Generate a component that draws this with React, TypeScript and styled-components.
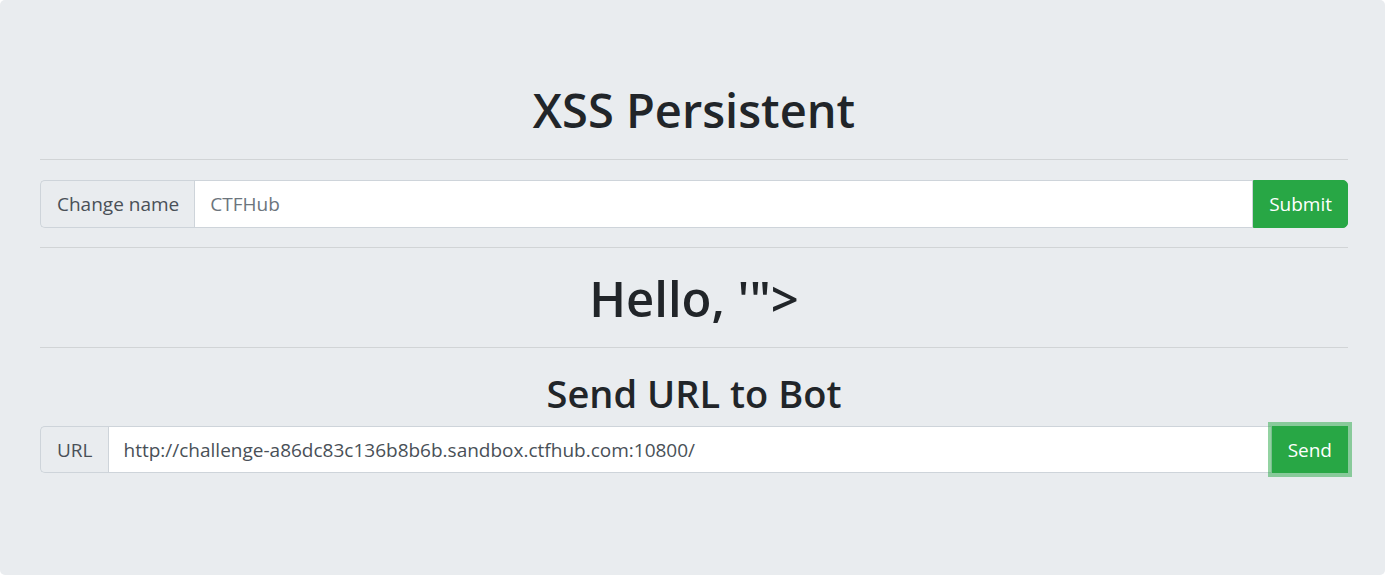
import React from "react";
import styled, {createGlobalStyle} from "styled-components";

const GlobalStyle = createGlobalStyle`
    html, body {
        margin: 0;
        padding: 0;
        background: #ffffff;
    }
    body {
        font-family: "Open Sans", "Noto Sans", "Liberation Sans", sans-serif;
        color: #212529;
    }
    * {
        box-sizing: border-box;
    }
`;

const Jumbotron = styled.main`
    min-height: 575px;
    background: #e9ecef;
    border-radius: 5px;
    padding: 80px 37px 40px 40px;
`;

const Title = styled.h1<{ $size: number; $lh: number }>`
    margin: 0;
    text-align: center;
    font-weight: 600;
    font-size: ${({$size}) => $size}px;
    line-height: ${({$lh}) => $lh}px;
    color: #212529;
`;

const Rule = styled.hr`
    margin: 19px 0 20px;
    border: 0;
    border-top: 1px solid rgba(0, 0, 0, 0.1);
`;

const InputGroup = styled.form<{ $height: number }>`
    display: flex;
    align-items: stretch;
    width: 100%;
    height: ${({$height}) => $height}px;
    margin: 0;
`;

const Addon = styled.span`
    display: flex;
    align-items: center;
    padding: 0 15px 0 16px;
    font-size: 19px;
    color: #495057;
    background: #e9ecef;
    border: 1px solid #ced4da;
    border-right: 0;
    border-radius: 5px 0 0 5px;
    white-space: nowrap;
`;

const Field = styled.input`
    flex: 1;
    min-width: 0;
    height: 100%;
    padding: 0 15px;
    font-family: inherit;
    font-size: 19px;
    color: #495057;
    background: #ffffff;
    border: 1px solid #ced4da;
    border-radius: 0;
    outline: none;

    &::placeholder {
        color: #6c757d;
        opacity: 1;
    }
`;

const Button = styled.button<{ $rounded?: boolean; $focused?: boolean }>`
    padding: 0 15px;
    font-family: inherit;
    font-size: 19px;
    color: #ffffff;
    background: #28a745;
    border: 1px solid #28a745;
    border-radius: ${({$rounded}) => $rounded ? "0 5px 5px 0" : "0"};
    box-shadow: ${({$focused}) => $focused ? "0 0 0 4px rgba(40, 167, 69, 0.5)" : "none"};
    position: relative;
    cursor: pointer;
`;

const SubTitle = styled(Title)`
    margin-bottom: 8px;
`;

export default function App() {
    return (
        <>
            <GlobalStyle/>
            <Jumbotron>
                <Title $size={47} $lh={60}>XSS Persistent</Title>
                <Rule/>
                <InputGroup $height={48} onSubmit={(e) => e.preventDefault()}>
                    <Addon>Change name</Addon>
                    <Field type="text" placeholder="CTFHub"/>
                    <Button type="submit" $rounded>Submit</Button>
                </InputGroup>
                <Rule/>
                <Title $size={49} $lh={60}>Hello, '"&gt;</Title>
                <Rule/>
                <SubTitle $size={38} $lh={50}>Send URL to Bot</SubTitle>
                <InputGroup $height={47} onSubmit={(e) => e.preventDefault()}>
                    <Addon>URL</Addon>
                    <Field type="text" defaultValue="http://challenge-a86dc83c136b8b6b.sandbox.ctfhub.com:10800/"/>
                    <Button type="submit" $focused>Send</Button>
                </InputGroup>
            </Jumbotron>
        </>
    );
}
